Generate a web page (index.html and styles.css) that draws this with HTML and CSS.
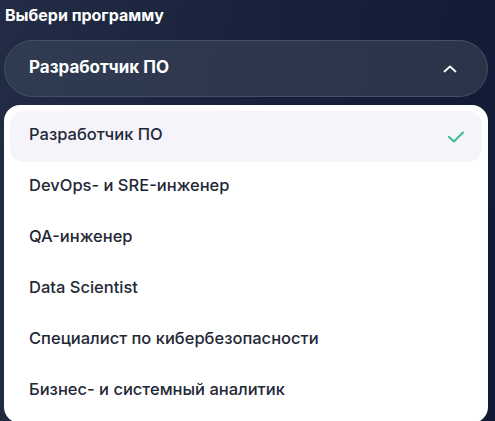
FILE: index.html
```html
<!DOCTYPE html>
<html lang="ru">
<head>
    <meta charset="UTF-8">
    <meta name="viewport" content="width=device-width, initial-scale=1.0">
    <title>Выбери программу</title>
    <link rel="stylesheet" href="styles.css">
</head>
<body>
    <div class="picker">
        <div class="picker-title">Выбери программу</div>

        <div class="select-box">
            <span class="select-value">Разработчик ПО</span>
            <svg class="chevron" width="14" height="14" viewBox="0 0 14 14">
                <path d="M1.5 9.5 L7 4.5 L12.5 9.5" fill="none" stroke="#fff" stroke-width="1.8" stroke-linecap="round" stroke-linejoin="round"/>
            </svg>
        </div>

        <ul class="options">
            <li class="option selected">
                <span>Разработчик ПО</span>
                <svg class="check" width="18" height="14" viewBox="0 0 18 14">
                    <path d="M2 7 L7 11.5 L16 2.5" fill="none" stroke="#3dbb8c" stroke-width="2" stroke-linecap="round" stroke-linejoin="round"/>
                </svg>
            </li>
            <li class="option"><span>DevOps- и SRE-инженер</span></li>
            <li class="option"><span>QA-инженер</span></li>
            <li class="option"><span>Data Scientist</span></li>
            <li class="option"><span>Специалист по кибербезопасности</span></li>
            <li class="option"><span>Бизнес- и системный аналитик</span></li>
        </ul>
    </div>
</body>
</html>
```

FILE: styles.css
```css
html, body {
    height: 100%;
}
body {
    margin: 0;
    font-family: Inter, "Noto Sans", sans-serif;
    background: linear-gradient(100deg, #222d45 0%, #17213a 50%, #101a35 100%);
    overflow: hidden;
}
.picker {
    padding: 5px 7px 0 4px;
}
.picker-title {
    color: #fff;
    font-size: 16px;
    font-weight: 700;
    line-height: 20px;
    padding-left: 1px;
    margin-bottom: 15px;
}
.select-box {
    display: flex;
    align-items: center;
    justify-content: space-between;
    height: 55px;
    padding: 0 30px 0 24px;
    border: 1px solid #44506a;
    border-radius: 29px;
    background: linear-gradient(100deg, #2f3b51 0%, #2a3449 100%);
}
.select-value {
    color: #fff;
    font-size: 17px;
    font-weight: 700;
    padding-bottom: 3px;
}
.chevron {
    display: block;
}
.options {
    list-style: none;
    margin: 8px 0 0;
    padding: 6px 6px 6px;
    background: #fff;
    border-radius: 16px;
}
.option {
    display: flex;
    align-items: center;
    justify-content: space-between;
    height: 51px;
    padding: 0 17px 0 19px;
    border-radius: 14px;
    color: #232836;
    font-size: 16.5px;
    font-weight: 500;
}
.option span {
    padding-bottom: 5px;
}
.option.selected {
    background: #f5f4fa;
}
.check {
    display: block;
}
```
